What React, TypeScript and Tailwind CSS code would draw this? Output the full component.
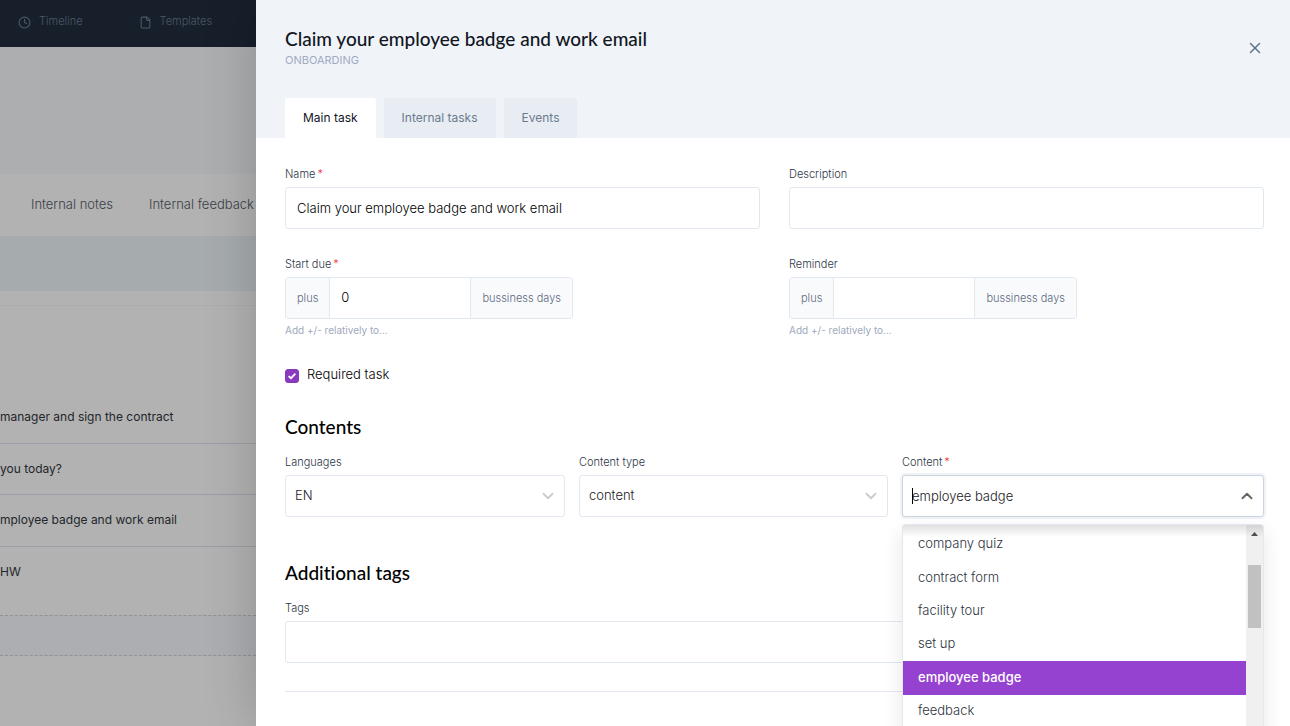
import { useState } from 'react';
import { ChevronDown, ChevronUp, Clock, File, X } from 'lucide-react';

const tabs = ['Main task', 'Internal tasks', 'Events'];

const contentOptions = ['company quiz', 'contract form', 'facility tour', 'set up', 'employee badge', 'feedback'];

const taskRows = ['manager and sign the contract', 'you today?', 'mployee badge and work email', 'HW'];

const headingClass = 'font-[Lato,sans-serif] font-medium text-[19px] leading-7 [font-variant-ligatures:none]';
const labelClass = 'block text-[11px] leading-4 mb-[5px] text-[#2d3748]';
const boxClass = 'w-full h-[42px] bg-white border border-[#e2e8f0] rounded-[3px] text-[13px] outline-none';

const Label = ({ id, text, required }: { id: string; text: string; required?: boolean }) => (
    <label htmlFor={id} className={labelClass}>
        {text}
        {required && <span className="text-[#f02d2d] ml-[2px]">*</span>}
    </label>
);

const DaysField = ({ id, label, required, initial }: { id: string; label: string; required?: boolean; initial: string }) => {
    const [value, setValue] = useState(initial);

    return (
        <div>
            <Label id={id} text={label} required={required} />
            <div className="flex w-72 h-[42px] border border-[#e2e8f0] rounded-[3px] overflow-hidden text-[11px] text-[#5b6880]">
                <span className="flex items-center px-[11px] bg-[#f9fafc] border-r border-[#e2e8f0]">plus</span>
                <input
                    id={id}
                    value={value}
                    onChange={(e) => setValue(e.target.value)}
                    className="flex-1 min-w-0 px-[11px] text-[13px] text-black outline-none"
                />
                <span className="flex items-center px-[11px] bg-[#f9fafc] border-l border-[#e2e8f0]">bussiness days</span>
            </div>
            <p className="mt-[3px] text-[10px] font-normal leading-4 text-[#a0a9bd]">Add +/- relatively to...</p>
        </div>
    );
};

const SelectField = ({ id, label, options }: { id: string; label: string; options: string[] }) => (
    <div>
        <Label id={id} text={label} />
        <div className="relative">
            <select id={id} className={`${boxClass} appearance-none px-[9px] text-[#1d2026]`}>
                {options.map((o) => <option key={o}>{o}</option>)}
            </select>
            <ChevronDown size={18} strokeWidth={2.5} className="absolute right-2 top-3 text-[#cccccc] pointer-events-none" />
        </div>
    </div>
);

const ContentPicker = () => {
    const [value, setValue] = useState('employee badge');

    return (
        <div className="relative">
            <Label id="content" text="Content" required />
            <div className="relative">
                <input
                    id="content"
                    role="combobox"
                    aria-expanded="true"
                    aria-controls="content-list"
                    value={value}
                    onChange={(e) => setValue(e.target.value)}
                    className="w-full h-[42px] bg-white border border-[#cbd5e0] rounded-[3px] px-[9px] text-[13px] text-[#1d2026] outline-none shadow-[0_0_0_2px_#eff3f8]"
                />
                {/* caret */}
                <span className="absolute left-[10px] top-[13px] w-px h-4 bg-black" />
                <ChevronUp size={18} strokeWidth={2.5} className="absolute right-2 top-3 text-[#666666] pointer-events-none" />
            </div>

            {/* Open menu */}
            <div className="absolute z-10 left-0 right-0 top-full mt-[7px] flex h-[260px] bg-white border border-[#e2e8f0] rounded-[3px] shadow-[0_8px_20px_rgba(0,0,0,0.10)] overflow-hidden">
                <ul id="content-list" role="listbox" className="flex-1 mt-[3px] h-[200px] grid grid-rows-6 text-[13px] text-[#2d3340]">
                    {contentOptions.map((option) => (
                        <li
                            key={option}
                            role="option"
                            aria-selected={option === value}
                            onClick={() => setValue(option)}
                            className={`flex items-center px-[15px] pb-px ${option === value ? 'bg-[#9542d0] text-white font-medium' : ''}`}
                        >
                            {option}
                        </li>
                    ))}
                </ul>
                <div className="w-[17px] bg-[#f0f0f0] flex flex-col items-center pt-[7px]">
                    <svg width="7" height="4" viewBox="0 0 7 4"><path d="M0 4L3.5 0L7 4Z" fill="#505050" /></svg>
                    <div className="w-[13px] h-[63px] mt-[29px] bg-[#c1c1c1]" />
                </div>
                <div className="absolute inset-x-0 top-0 h-3 bg-linear-to-b from-black/12 to-transparent pointer-events-none" />
            </div>
        </div>
    );
};

/* Dimmed page that stays visible behind the drawer */
const PageBehind = () => (
    <div className="w-64 shrink-0 overflow-hidden whitespace-nowrap bg-[#b2b2b2] text-[13px]">
        <nav className="h-[47px] bg-[#171f2b] flex items-start gap-14 pl-[18px] pt-[13px] text-[11px] leading-4 text-[#4b5668]">
            <a href="#timeline" className="flex items-center gap-2"><Clock size={13} className="mt-[2px]" />Timeline</a>
            <a href="#templates" className="flex items-center gap-2"><File size={13} className="mt-[2px]" />Templates</a>
        </nav>
        <div className="h-[127px] bg-[#adaeb0]" />
        <div className="h-[62px] flex items-center gap-9 pl-[31px] text-[#3a4048]">
            <a href="#notes">Internal notes</a>
            <a href="#feedback">Internal feedback</a>
        </div>
        <div className="h-[55px] bg-[#a6abae]" />
        <div className="h-[15px] border-b border-[#adadad]" />
        <ul className="mt-[86px] h-[206px] grid grid-rows-4 text-[12px] font-normal text-[#23262b]">
            {taskRows.map((row) => (
                <li key={row} className="flex items-center border-b border-[#9c9ea7] last:border-b-0">{row}</li>
            ))}
        </ul>
        <div className="mt-[17px] h-[41px] bg-[#acaeb1] border-y border-dashed border-[#8f9297]" />
    </div>
);

export default function App() {
    const [activeTab, setActiveTab] = useState('Main task');
    const [name, setName] = useState('Claim your employee badge and work email');
    const [description, setDescription] = useState('');
    const [tags, setTags] = useState('');
    const [required, setRequired] = useState(true);

    return (
        <div className="flex h-screen overflow-hidden font-[Inter,sans-serif] font-light">
            <PageBehind />

            <main className="relative flex-1 min-w-0 bg-white shadow-[0_0_50px_rgba(0,0,0,0.2)]">
                <header className="bg-[#f0f4f9] pl-[29px] pr-[26px] pt-[25px]">
                    <div className="flex justify-between items-start">
                        <div>
                            <h1 className={`${headingClass} text-[#12161f]`}>
                                Claim your employee badge and work email
                            </h1>
                            <p className="text-[11px] font-normal leading-4 -mt-px text-[#a0abc3]">ONBOARDING</p>
                        </div>
                        <button aria-label="Close" className="mt-[14px] text-[#64748b]"><X size={18} strokeWidth={2} /></button>
                    </div>
                    <div className="flex gap-2 mt-[30px]">
                        {tabs.map((tab) => (
                            <button
                                key={tab}
                                onClick={() => setActiveTab(tab)}
                                className={`h-10 px-[18px] rounded-t-[3px] text-[12px] font-normal ${tab === activeTab ? 'bg-white text-[#12161f]' : 'bg-[#e8edf4] text-[#6b7a8d]'}`}
                            >
                                {tab}
                            </button>
                        ))}
                    </div>
                </header>

                <form className="pl-[29px] pr-[26px] pt-7">
                    <div className="grid grid-cols-2 gap-x-[29px] gap-y-[27px]">
                        <div>
                            <Label id="name" text="Name" required />
                            <input id="name" value={name} onChange={(e) => setName(e.target.value)} className={`${boxClass} px-[11px] text-black`} />
                        </div>
                        <div>
                            <Label id="description" text="Description" />
                            <input id="description" value={description} onChange={(e) => setDescription(e.target.value)} className={`${boxClass} px-[11px] text-black`} />
                        </div>
                        <DaysField id="start-due" label="Start due" required initial="0" />
                        <DaysField id="reminder" label="Reminder" initial="" />
                    </div>

                    <label className="relative mt-[26px] flex items-center gap-2 w-fit text-[13px] leading-5 text-black">
                        <input
                            type="checkbox"
                            checked={required}
                            onChange={(e) => setRequired(e.target.checked)}
                            className="appearance-none mt-1 size-[14px] rounded-[3px] border border-[#8338b8] checked:bg-[#8a3bbd]"
                        />
                        {required && (
                            <svg className="absolute left-[3px] top-2 pointer-events-none" width="8" height="8" viewBox="0 0 8 8" fill="none">
                                <path d="M0.6 4.1L3 6.2L7.4 1.6" stroke="white" strokeWidth="1.8" />
                            </svg>
                        )}
                        Required task
                    </label>

                    <h2 className={`${headingClass} mt-[29px] mb-[13px] text-black`}>Contents</h2>
                    <div className="grid grid-cols-[280fr_309fr_362fr] gap-[14px]">
                        <SelectField id="languages" label="Languages" options={['EN']} />
                        <SelectField id="content-type" label="Content type" options={['content']} />
                        <ContentPicker />
                    </div>

                    <h2 className={`${headingClass} mt-[42px] mb-[13px] text-black`}>Additional tags</h2>
                    <Label id="tags" text="Tags" />
                    <input id="tags" value={tags} onChange={(e) => setTags(e.target.value)} className={`${boxClass} px-[11px]`} />
                    <hr className="mt-7 border-[#e2e8f0]" />
                </form>
            </main>
        </div>
    );
}
